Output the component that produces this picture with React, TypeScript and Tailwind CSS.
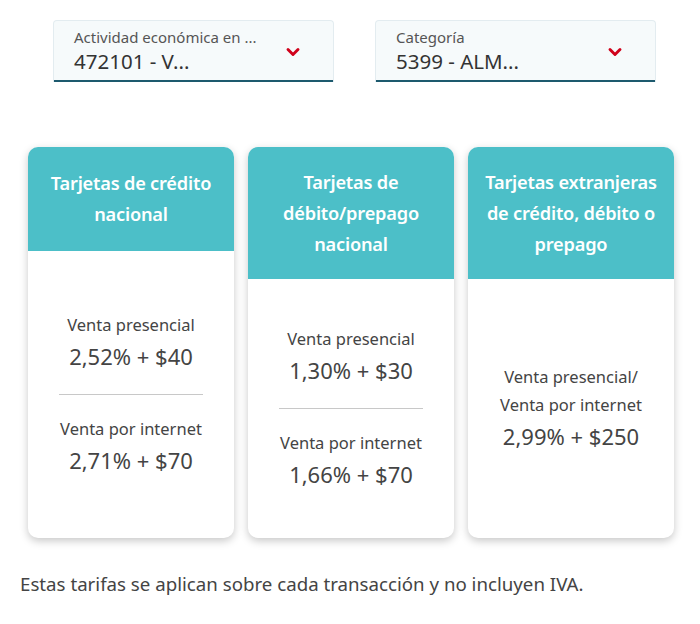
import { ChevronDown } from "lucide-react";

type Rate = { label: string[]; value: string };
type Plan = { title: string[]; rates: Rate[] };

const PLANS: Plan[] = [
  {
    title: ["Tarjetas de crédito", "nacional"],
    rates: [
      { label: ["Venta presencial"], value: "2,52% + $40" },
      { label: ["Venta por internet"], value: "2,71% + $70" },
    ],
  },
  {
    title: ["Tarjetas de", "débito/prepago", "nacional"],
    rates: [
      { label: ["Venta presencial"], value: "1,30% + $30" },
      { label: ["Venta por internet"], value: "1,66% + $70" },
    ],
  },
  {
    title: ["Tarjetas extranjeras", "de crédito, débito o", "prepago"],
    rates: [{ label: ["Venta presencial/", "Venta por internet"], value: "2,99% + $250" }],
  },
];

function Select({ label, value }: { label: string; value: string }) {
  return (
    <div className="flex h-[62px] w-[281px] items-center justify-between rounded-t-[4px] border border-b-0 border-[#e3ecf0] bg-[#f6fafb] pl-[20px] pr-[30px] shadow-[inset_0_-2px_0_#1d5a6e]">
      <div className="-mt-[2px] flex flex-col">
        <span className="text-[15px] leading-[20px] text-[#555]">{label}</span>
        <span className="text-[20.5px] leading-[28px] text-[#333]">{value}</span>
      </div>
      <ChevronDown size={20} strokeWidth={3.5} className="text-[#d0021b]" />
    </div>
  );
}

function PlanCard({ plan }: { plan: Plan }) {
  return (
    <div className="flex w-[206px] flex-col overflow-hidden rounded-[10px] bg-white shadow-[0_3px_8px_rgba(0,0,0,0.22)]">
      <div
        className={`flex flex-col items-center justify-center bg-[#4cbfc8] text-[18.2px] font-semibold leading-[31px] tracking-[-0.2px] text-white ${
          plan.title.length > 2 ? "h-[132px]" : "h-[104px]"
        }`}
      >
        {plan.title.map((t) => (
          <span key={t}>{t}</span>
        ))}
      </div>
      <div className="flex flex-1 flex-col items-center justify-center pb-[1px] text-[#444]">
        {plan.rates.map((r, i) => (
          <div key={r.value} className="flex flex-col items-center">
            {i > 0 && <div className="mt-[21px] mb-[20px] h-px w-[144px] bg-[#c8c8c8]" />}
            {r.label.map((l) => (
              <span key={l} className="text-[16.5px] leading-[28px]">
                {l}
              </span>
            ))}
            <span className="text-[22px] leading-[34px]">{r.value}</span>
          </div>
        ))}
      </div>
    </div>
  );
}

export default function App() {
  return (
    <div className="h-[624px] w-[700px] bg-white font-['Noto_Sans',sans-serif]">
      <div className="flex gap-[41px] pl-[53px] pt-[20px]">
        <Select label="Actividad económica en ..." value="472101 - V..." />
        <Select label="Categoría" value="5399 - ALM..." />
      </div>
      <div className="mt-[65px] flex h-[391px] gap-[14px] pl-[28px]">
        {PLANS.map((p) => (
          <PlanCard key={p.title.join()} plan={p} />
        ))}
      </div>
      <p className="mt-[34px] pl-[20px] text-[18.7px] leading-[24px] text-[#444]">
        Estas tarifas se aplican sobre cada transacción y no incluyen IVA.
      </p>
    </div>
  );
}
